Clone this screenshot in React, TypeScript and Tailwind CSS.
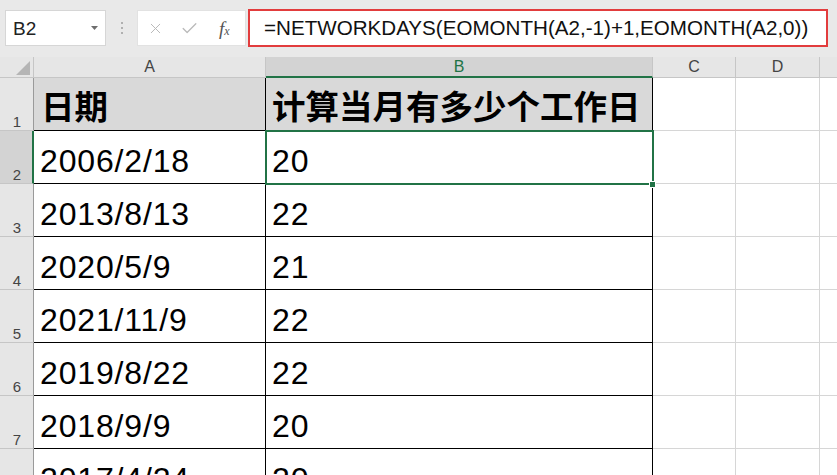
import { X, Check } from 'lucide-react';

const rows = [
  { n: 2, date: '2006/2/18', days: '20' },
  { n: 3, date: '2013/8/13', days: '22' },
  { n: 4, date: '2020/5/9', days: '21' },
  { n: 5, date: '2021/11/9', days: '22' },
  { n: 6, date: '2019/8/22', days: '22' },
  { n: 7, date: '2018/9/9', days: '20' },
  { n: 8, date: '2017/4/24', days: '20' },
];

function FormulaBar() {
  return (
    <div className="h-[57px] bg-[#e9e9e9] flex items-start pt-[10px] pl-[5px]">
      <div className="w-[101px] h-[36px] bg-white border border-[#d6d6d6] flex items-center justify-between pl-[7px] pr-[7px]">
        <span className="text-[19px] text-[#222] leading-none">B2</span>
        <svg width="7" height="4" viewBox="0 0 7 4">
          <path d="M0 0 L7 0 L3.5 4 Z" fill="#6e6e6e" />
        </svg>
      </div>
      <div className="w-[31px] h-[36px] flex flex-col items-center justify-center gap-[3px]">
        <span className="w-[2px] h-[2px] bg-[#b0b0b0]" />
        <span className="w-[2px] h-[2px] bg-[#b0b0b0]" />
        <span className="w-[2px] h-[2px] bg-[#b0b0b0]" />
      </div>
      <div className="w-[109px] h-[36px] bg-white border border-[#e2e2e2] flex items-center pl-[9px]">
        <X className="w-[17px] h-[17px] text-[#b9b9b9]" strokeWidth={1.4} />
        <Check className="w-[19px] h-[19px] text-[#b9b9b9] ml-[16px]" strokeWidth={1.6} />
        <span className="ml-[20px] font-['Liberation_Serif'] italic text-[19px] text-[#555] leading-none">
          f<span className="text-[12px]">x</span>
        </span>
      </div>
      <div className="ml-[2px] -mt-[1px] w-[580px] h-[38px] bg-white border-[2.5px] border-[#e23c3d] flex items-center pl-[14px]">
        <span className="text-[20.6px] text-[#111] leading-none">=NETWORKDAYS(EOMONTH(A2,-1)+1,EOMONTH(A2,0))</span>
      </div>
    </div>
  );
}

function ColumnHeaders() {
  return (
    <div className="flex h-[21px] bg-[#e6e6e6] text-[16px] text-[#444] leading-none">
      <div className="w-[34px] border-r border-b border-[#c6c6c6] flex items-end justify-end pr-[3px] pb-[2px]">
        <svg width="14" height="14" viewBox="0 0 14 14">
          <path d="M14 0 L14 14 L0 14 Z" fill="#b5b5b5" />
        </svg>
      </div>
      <div className="w-[232px] border-r border-b border-[#c6c6c6] flex items-center justify-center">A</div>
      <div className="w-[387px] border-r border-[#c6c6c6] bg-[#d3d3d3] border-b-2 border-b-[#217346] text-[#217346] flex items-center justify-center">B</div>
      <div className="w-[83px] border-r border-b border-[#c6c6c6] flex items-center justify-center">C</div>
      <div className="w-[84px] border-r border-b border-[#c6c6c6] flex items-center justify-center">D</div>
      <div className="flex-1 border-b border-[#c6c6c6]" />
    </div>
  );
}

function RowHeader({ n, selected }: { n: number; selected?: boolean }) {
  return (
    <div
      className={
        selected
          ? 'w-[34px] bg-[#d3d3d3] border-r-2 border-r-[#217346] border-b border-b-[#c6c6c6] flex items-end justify-center pb-[1px] pl-[2px] text-[15px] leading-none text-[#444]'
          : 'w-[34px] bg-[#e6e6e6] border-r border-r-[#9a9a9a] border-b border-b-[#c6c6c6] flex items-end justify-center pb-[1px] pl-[1px] text-[15px] leading-none text-[#444]'
      }
    >
      {n}
    </div>
  );
}

function EmptyCells() {
  return (
    <>
      <div className="w-[83px] border-r border-b border-[#d6d6d6]" />
      <div className="w-[84px] border-r border-b border-[#d6d6d6]" />
      <div className="flex-1 border-b border-[#d6d6d6]" />
    </>
  );
}

export default function App() {
  return (
    <div className="relative w-[837px] h-[475px] overflow-hidden bg-white font-['Liberation_Sans','Noto_Sans_CJK_SC',sans-serif]">
      <FormulaBar />
      <ColumnHeaders />

      <div className="flex h-[53px]">
        <RowHeader n={1} />
        <div className="w-[232px] bg-[#d9d9d9] border-r border-b border-black flex items-end pl-[7px] pb-[9px] font-['Noto_Sans_CJK_SC',sans-serif] font-bold text-[33.5px] leading-none text-black">
          日期
        </div>
        <div className="w-[387px] bg-[#d9d9d9] border-r border-b border-black flex items-end pl-[6px] pb-[9px] font-['Noto_Sans_CJK_SC',sans-serif] font-bold text-[33.5px] leading-none text-black whitespace-nowrap">
          计算当月有多少个工作日
        </div>
        <EmptyCells />
      </div>

      {rows.map((r) => (
        <div key={r.n} className="flex h-[53px]">
          <RowHeader n={r.n} selected={r.n === 2} />
          <div className="w-[232px] border-r border-b border-black flex items-end pl-[6px] pb-[6px] text-[32px] tracking-[0.85px] leading-none text-black">
            {r.date}
          </div>
          <div className="w-[387px] border-r border-b border-black flex items-end pl-[6px] pb-[6px] text-[32px] tracking-[0.85px] leading-none text-black">
            {r.days}
          </div>
          <EmptyCells />
        </div>
      ))}

      {/* active cell B2 */}
      <div className="absolute left-[265px] top-[130px] w-[389px] h-[55px] border-2 border-[#217346] pointer-events-none" />
      <div className="absolute left-[649px] top-[181px] w-[7px] h-[7px] bg-[#217346] border border-white" />
    </div>
  );
}
